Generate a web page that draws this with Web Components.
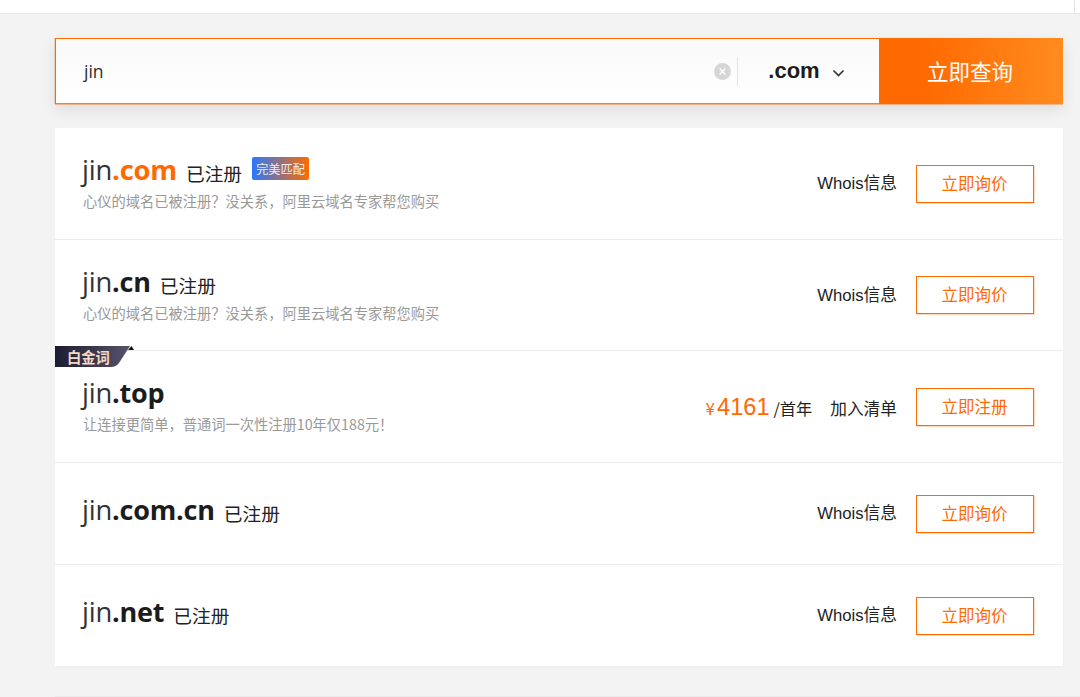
<!doctype html>
<html lang="zh"><head><meta charset="utf-8">
<style>
html,body{margin:0;height:697px;overflow:hidden;background:#f3f3f3;font-family:"Liberation Sans","Noto Sans CJK SC",sans-serif}
body{display:flex;flex-direction:column}
</style></head><body>
<top-bar></top-bar>
<main-area>
  <search-bar value="jin" suffix=".com" action="立即查询"></search-bar>
  <result-list>
    <domain-row name="jin" tld=".com" accent status="已注册" perfect note="心仪的域名已被注册？没关系，阿里云域名专家帮您购买" h="112" link="Whois信息" btn="立即询价"></domain-row>
    <domain-row name="jin" tld=".cn" status="已注册" note="心仪的域名已被注册？没关系，阿里云域名专家帮您购买" h="111" link="Whois信息" btn="立即询价"></domain-row>
    <domain-row name="jin" tld=".top" platinum note="让连接更简单，普通词一次性注册10年仅188元！" h="112" price="4161" link="加入清单" btn="立即注册"></domain-row>
    <domain-row name="jin" tld=".com.cn" status="已注册" h="102" link="Whois信息" btn="立即询价"></domain-row>
    <domain-row name="jin" tld=".net" status="已注册" h="101" last link="Whois信息" btn="立即询价"></domain-row>
  </result-list>
</main-area>
<page-foot></page-foot>
<script>
const CJK='"Noto Sans CJK SC",sans-serif';
function def(name,css,html){
  customElements.define(name,class extends HTMLElement{
    constructor(){super();this.attachShadow({mode:'open'});}
    connectedCallback(){
      const a=k=>this.getAttribute(k);
      this.shadowRoot.innerHTML='<style>'+css+'</style>'+(typeof html==='function'?html(a,this):html);
    }
  });
}
def('top-bar',`:host{display:block;height:13px;background:#fff;border-bottom:1px solid #e9e9e9;position:relative;flex:none}
.v{position:absolute;left:1074px;top:0;width:1px;height:13px;background:#e6e6e6}`,'<div class="v"></div>');
def('main-area',`:host{display:flex;flex-direction:column;padding:24px 17px 0 55px;flex:none}`,'<slot></slot>');
def('search-bar',`:host{display:flex;height:66px;box-sizing:border-box;box-shadow:0 1px 0 rgba(255,122,30,.45),-1px 0 0 rgba(255,106,0,.25),0 6px 14px rgba(0,0,0,.09);flex:none;margin-bottom:24px}
.box{flex:1;display:flex;align-items:center;box-sizing:border-box;border:1px solid #ff6a00;border-bottom-color:#ff7d26;border-right:0;background:linear-gradient(#f9f9f9,#fff);min-width:0;padding-left:28px}
.val{flex:1;font:17.5px "Open Sans",${CJK};color:#2b2b2b}
.clear{width:17px;height:17px;display:block;margin-right:6px}
.sep{width:1px;height:29px;background:#e3e3e3}
.sel{width:141px;display:flex;align-items:center;justify-content:center;gap:13px;font:bold 22px "Liberation Sans",sans-serif;color:#1c1c1c;box-sizing:border-box;padding-right:4px}
.sel svg{display:block;margin-top:3px;margin-left:-1px}
button{all:unset;width:184px;height:66px;box-sizing:border-box;padding-right:2px;text-align:center;background:linear-gradient(90deg,#ff6a00 0%,#ff6a00 25%,#ff8c20 100%);color:#fff;font:21.5px/60px ${CJK}}`,
a=>`<div class="box"><span class="val">${a('value')}</span>
<svg class="clear" viewBox="0 0 17 17"><circle cx="8.5" cy="8.5" r="8.5" fill="#d6d6d6"/><path d="M5.6 5.6l5.8 5.8M11.4 5.6l-5.8 5.8" stroke="#fff" stroke-width="1.4"/></svg>
<span class="sep"></span>
<div class="sel"><span>${a('suffix')}</span><svg width="13" height="8" viewBox="0 0 13 8"><path d="M1.5 1.5l5 5 5-5" fill="none" stroke="#333" stroke-width="1.6"/></svg></div></div>
<button>${a('action')}</button>`);
def('result-list',`:host{display:flex;flex-direction:column;background:#fff;box-shadow:0 1px 2px rgba(0,0,0,.03)}`,'<slot></slot>');
def('domain-row',`:host{display:flex;align-items:center;box-sizing:border-box;position:relative;padding:0 29px 0 27px;border-bottom:1px solid #ededed}
:host([last]){border-bottom:0}
.left{flex:1;min-width:0;display:flex;flex-direction:column;padding-bottom:5px}
.left.nn{padding-bottom:8px}
.title{display:flex;align-items:flex-end;height:40px}
.d{font:27.4px "Open Sans",${CJK};color:#333;line-height:40px;letter-spacing:-.2px}
.d b{font-weight:700;font-size:27px;color:#1c1c1c}
.d.acc b{color:#ff6a00;font-size:27.4px}
.st{font:18.7px ${CJK};color:#222;margin-left:9px;line-height:26px;margin-bottom:4px}
.pf{align-self:flex-start;margin:7px 0 0 10px;width:57px;height:23px;border-radius:2px;background:linear-gradient(90deg,#2a78ff,#ff6a00);color:#f3eee8;font:12.2px/24px ${CJK};text-align:center}
.note{font:14.25px/22px ${CJK};color:#999;padding-left:1px}
.right{display:flex;align-items:center}
.price{color:#ff6a00;font:23.6px "Liberation Sans",sans-serif;display:flex;align-items:baseline;margin-right:18px;position:relative;top:1px}
.price i{font:normal 17px ${CJK};margin-right:2px}
.price span{font:16.2px ${CJK};color:#222;margin-left:4px}
.link{font:16.7px "Liberation Sans",${CJK};color:#222;margin-right:19px;margin-bottom:3px}
.link.add{margin-bottom:-2px}
.btn{width:118px;height:38px;box-sizing:border-box;border:1px solid #ff6a00;box-shadow:1px 1px 0 rgba(255,106,0,.25);color:#ff6a00;font:16.5px/34px ${CJK};text-align:center;padding-right:1px}
.plat{position:absolute;left:0;top:-5px;width:80px;height:21px;display:block}
.plat svg{position:absolute;left:0;top:0}
.plat span{position:absolute;left:12px;top:0;font:bold 14.3px/21px ${CJK};color:#f6d9c6}`,
(a,el)=>{const acc=el.hasAttribute('accent');el.style.height=a('h')+'px';
return `${el.hasAttribute('platinum')?`<div class="plat"><svg width="80" height="21" viewBox="0 0 80 21"><defs><linearGradient id="g"><stop offset="0" stop-color="#1c1c30"/><stop offset="1" stop-color="#57536b"/></linearGradient></defs><path d="M0 0H75L64 17Q61 21 56 21H0Z" fill="url(#g)"/><path d="M73 4L76.500 0L79 4Z" fill="#111"/></svg><span>白金词</span></div>`:''}
<div class="left ${a('note')?'':'nn'}"><div class="title"><span class="d ${acc?'acc':''}">${a('name')}<b>${a('tld')}</b></span>${a('status')?`<span class="st">${a('status')}</span>`:''}${el.hasAttribute('perfect')?'<span class="pf">完美匹配</span>':''}</div>
${a('note')?`<div class="note">${a('note')}</div>`:''}</div>
<div class="right">${a('price')?`<div class="price"><i>¥</i>${a('price')}<span>/首年</span></div>`:''}<span class="link ${a('price')?'add':''}">${a('link')}</span><div class="btn">${a('btn')}</div></div>`});
def('page-foot',`:host{display:block;height:1px;background:#ebebeb;margin:30px 0 0 55px}`,'');
</script>
</body></html>
